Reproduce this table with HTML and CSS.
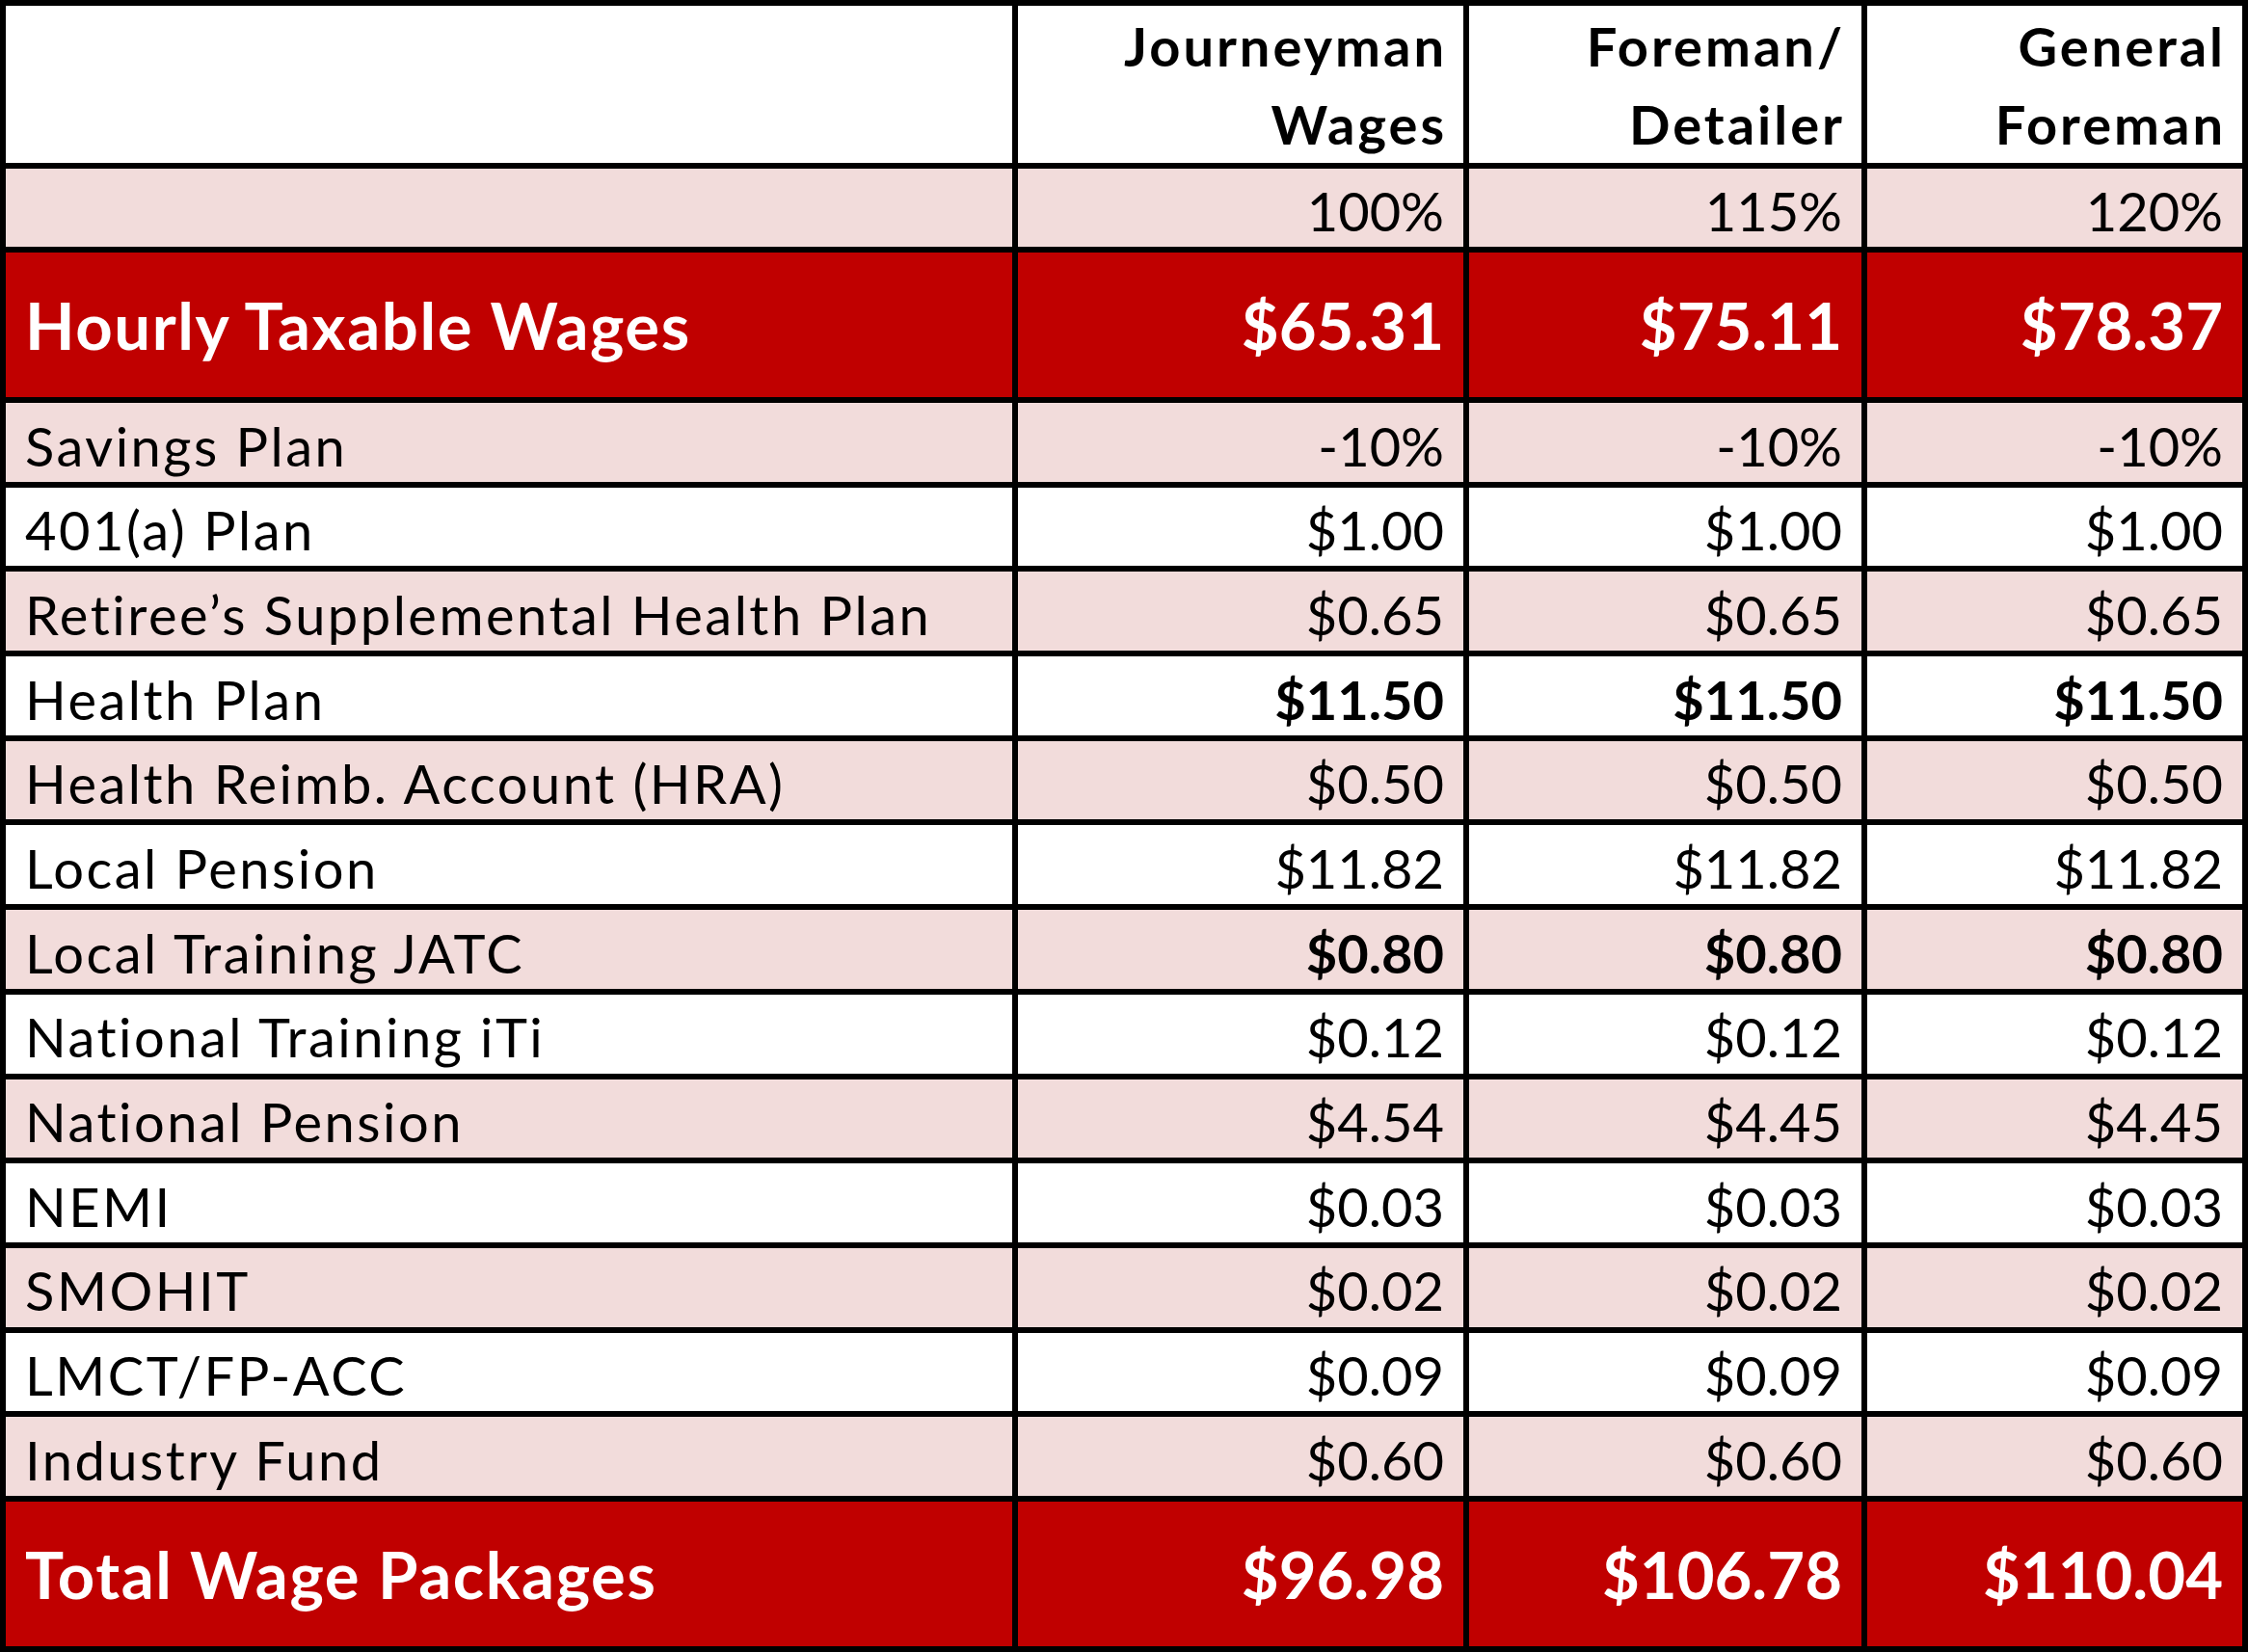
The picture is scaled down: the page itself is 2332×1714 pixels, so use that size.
FILE: index.html
```html
<!DOCTYPE html>
<html lang="en">
<head>
<meta charset="utf-8">
<title>Wage Packages</title>
<link rel="stylesheet" href="styles.css">
</head>
<body>
<table class="wages">
  <colgroup>
    <col class="col-label">
    <col class="col-jm">
    <col class="col-fd">
    <col class="col-gf">
  </colgroup>
  <thead>
    <tr class="row-head">
      <th class="label"></th>
      <th class="val">Journeyman<br>Wages</th>
      <th class="val">Foreman/<br>Detailer</th>
      <th class="val">General<br>Foreman</th>
    </tr>
  </thead>
  <tbody>
    <tr class="row pink">
      <td class="label"></td>
      <td class="val">100%</td>
      <td class="val">115%</td>
      <td class="val">120%</td>
    </tr>
    <tr class="row-red">
      <th class="label">Hourly Taxable Wages</th>
      <td class="val">$65.31</td>
      <td class="val">$75.11</td>
      <td class="val">$78.37</td>
    </tr>
    <tr class="row pink">
      <td class="label">Savings Plan</td>
      <td class="val">-10%</td>
      <td class="val">-10%</td>
      <td class="val">-10%</td>
    </tr>
    <tr class="row">
      <td class="label">401(a) Plan</td>
      <td class="val">$1.00</td>
      <td class="val">$1.00</td>
      <td class="val">$1.00</td>
    </tr>
    <tr class="row pink">
      <td class="label">Retiree’s Supplemental Health Plan</td>
      <td class="val">$0.65</td>
      <td class="val">$0.65</td>
      <td class="val">$0.65</td>
    </tr>
    <tr class="row">
      <td class="label">Health Plan</td>
      <td class="val strong">$11.50</td>
      <td class="val strong">$11.50</td>
      <td class="val strong">$11.50</td>
    </tr>
    <tr class="row pink">
      <td class="label">Health Reimb. Account (HRA)</td>
      <td class="val">$0.50</td>
      <td class="val">$0.50</td>
      <td class="val">$0.50</td>
    </tr>
    <tr class="row">
      <td class="label">Local Pension</td>
      <td class="val">$11.82</td>
      <td class="val">$11.82</td>
      <td class="val">$11.82</td>
    </tr>
    <tr class="row pink">
      <td class="label">Local Training JATC</td>
      <td class="val strong">$0.80</td>
      <td class="val strong">$0.80</td>
      <td class="val strong">$0.80</td>
    </tr>
    <tr class="row">
      <td class="label">National Training iTi</td>
      <td class="val">$0.12</td>
      <td class="val">$0.12</td>
      <td class="val">$0.12</td>
    </tr>
    <tr class="row pink">
      <td class="label">National Pension</td>
      <td class="val">$4.54</td>
      <td class="val">$4.45</td>
      <td class="val">$4.45</td>
    </tr>
    <tr class="row">
      <td class="label">NEMI</td>
      <td class="val">$0.03</td>
      <td class="val">$0.03</td>
      <td class="val">$0.03</td>
    </tr>
    <tr class="row pink">
      <td class="label">SMOHIT</td>
      <td class="val">$0.02</td>
      <td class="val">$0.02</td>
      <td class="val">$0.02</td>
    </tr>
    <tr class="row">
      <td class="label">LMCT/FP-ACC</td>
      <td class="val">$0.09</td>
      <td class="val">$0.09</td>
      <td class="val">$0.09</td>
    </tr>
    <tr class="row pink">
      <td class="label">Industry Fund</td>
      <td class="val">$0.60</td>
      <td class="val">$0.60</td>
      <td class="val">$0.60</td>
    </tr>
    <tr class="row-red">
      <th class="label">Total Wage Packages</th>
      <td class="val">$96.98</td>
      <td class="val">$106.78</td>
      <td class="val">$110.04</td>
    </tr>
  </tbody>
</table>
</body>
</html>
```

FILE: styles.css
```css
html, body {
  margin: 0;
  padding: 0;
  background: #ffffff;
}

body {
  width: 2332px;
  height: 1714px;
  overflow: hidden;
  font-family: Lato, "Liberation Sans", sans-serif;
  color: #000000;
}

.wages {
  width: 2332px;
  table-layout: fixed;
  border-collapse: separate;
  border-spacing: 6px;
  background: #000000;
}

.col-label { width: 1044px; }
.col-jm { width: 462px; }
.col-fd { width: 407px; }
.col-gf { width: 389px; }

.wages th,
.wages td {
  padding: 0 20px 4px 20px;
  background: #ffffff;
  font-size: 56px;
  font-weight: 400;
  line-height: 1.2;
  vertical-align: bottom;
  white-space: nowrap;
  overflow: hidden;
}

.wages .label {
  text-align: left;
  letter-spacing: 2.5px;
}
.wages .val { text-align: right; }

.row-head { height: 163px; }
.wages .row-head th {
  font-weight: 700;
  line-height: 81px;
  padding-bottom: 0;
  padding-right: 17px;
  letter-spacing: 3px;
}

.row { height: 81.7px; }
.wages .row.pink td { background: #f2dcdb; }
.wages .strong { font-weight: 700; }

.row-red { height: 150px; }
.wages .row-red th,
.wages .row-red td {
  background: #c00000;
  color: #ffffff;
  font-size: 67px;
  font-weight: 700;
  vertical-align: middle;
  padding-bottom: 0;
}
.wages .row-red .label { letter-spacing: 1.6px; }
.wages .row.pink:first-child { height: 81px; }
```
